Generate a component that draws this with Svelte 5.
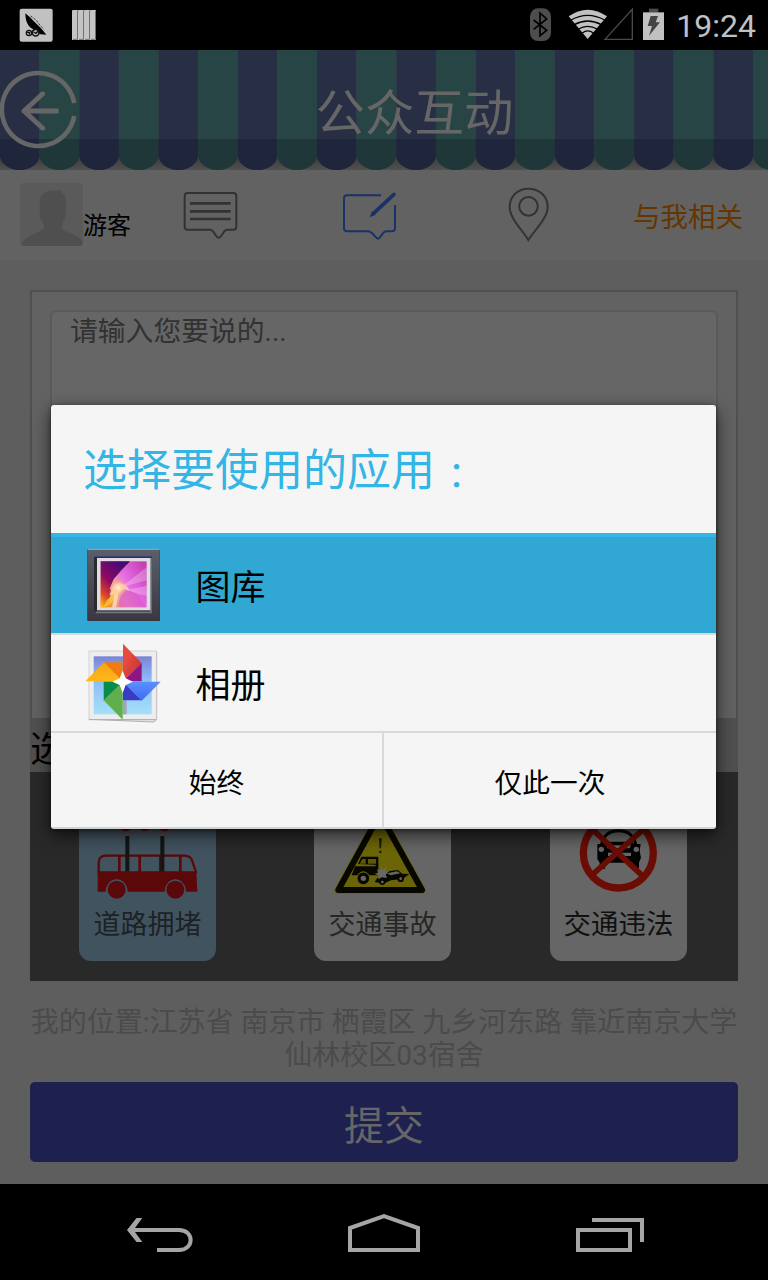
<script>
  const pitch = 39.63;
  const stripes = Array.from({ length: 20 }, (_, i) => ({ x: i * pitch, navy: i % 2 === 0 }));
  const scallop = (x, top) =>
    `M${x} ${top}H${x + pitch}V105C${x + pitch} 113 ${x + 31} 120 ${x + pitch / 2} 120C${x + 8.6} 120 ${x} 113 ${x} 105Z`;
</script>

<div class="screen">
  <header class="status">
    <svg width="110" height="50" viewBox="0 0 330 150">
      <rect x="59" y="26" width="99" height="99" rx="6" fill="#c1c1c1" />
      <path d="M76 40L90 52L103 65L117 79L127 89L139 104L121 103L105 90L94 85C82 77 76 60 76 40Z" fill="#000" />
      <path d="M92 48L109 61L120 76L132 88" stroke="#333" stroke-width="3" stroke-dasharray="7 4" fill="none" />
      <circle cx="87" cy="99" r="8" fill="#c1c1c1" stroke="#111" stroke-width="4" />
      <circle cx="107" cy="98" r="10" fill="#c1c1c1" stroke="#111" stroke-width="5" />
      <path d="M81 97H91M101 96L108 100L114 94M88 99V104" stroke="#111" stroke-width="4" fill="none" />
      {#each [216, 234, 252, 270] as x}
        <path d="M{x} 33Q{x} 30 {x + 3} 30H{x + 18}V120H{x}Z" fill="#c4c4c4" />
        <path d="M{x + 16.5} 32V118H{x + 3}" stroke="#707070" stroke-width="3" fill="none" />
      {/each}
    </svg>
    <div class="status-right">
      <svg width="150" height="50" viewBox="408 0 450 150">
        <rect x="438" y="25" width="63" height="98" rx="24" fill="#4d4d4d" />
        <path d="M449 60L488 91L468 107V39L488 57L449 88" fill="none" stroke="#000" stroke-width="5" />
        <path d="M611 117L554 49Q611 10 669 49Z" fill="#c1c1c1" />
        <g fill="none" stroke="#000" stroke-width="4">
          <path d="M561 60Q611 32 662 60" />
          <path d="M571 74Q611 52 652 74" />
          <path d="M583 87Q611 71 640 87" />
          <path d="M595 99Q611 86 628 99" />
        </g>
        <path d="M663 118L745 28V118Z" fill="none" stroke="#4a4a4a" stroke-width="4" />
        <path d="M795 26H823V37H795Z" fill="#4d4d4d" />
        <rect x="777" y="37" width="63" height="83" fill="#c1c1c1" />
        <path d="M800 48H822L815 67H828L795 107L804 78H791Z" fill="#444" />
      </svg>
      <span class="clock">19:24</span>
    </div>
  </header>

  <div class="awning">
    <svg class="awning-art" width="768" height="120" viewBox="0 0 768 120">
      <defs>
        <linearGradient id="eave" x1="0" y1="0" x2="0" y2="1">
          <stop offset="0" stop-color="#383838" />
          <stop offset="1" stop-color="#505050" />
        </linearGradient>
      </defs>
      <rect y="104" width="768" height="16" fill="url(#eave)" />
      {#each stripes as s}
        <path d={scallop(s.x, 0)} fill={s.navy ? '#282f45' : '#284545'} />
        <path d={scallop(s.x, 89)} fill={s.navy ? '#1f253a' : '#20373a'} />
      {/each}
      <path d="M74.200 53A36.500 36.500 0 1 0 74.200 66" fill="none" stroke="#666" stroke-width="4.6" />
      <path d="M58.500 61H24M43 43.500L24 61L43 78.500" fill="none" stroke="#666" stroke-width="5" stroke-linejoin="round" stroke-linecap="butt" />
      <circle cx="42.700" cy="43.800" r="2.400" fill="#666" /><circle cx="42.700" cy="78.200" r="2.400" fill="#666" />
    </svg>
    <h1>公众互动</h1>
  </div>

  <nav class="tabs">
    <div class="user">
      <svg width="63" height="63" viewBox="60 39 189 189">
        <rect x="60" y="39" width="189" height="189" rx="12" fill="#5a5a5a" />
        <path d="M66 220C72 202 108 190 120 184Q132 178 132 171Q131 160 126 153C119 148 118 135 120 121C118 105 119 82 128 72C142 59 164 64 175 60L184 61L182 65L193 76C201 88 197 107 197 121C200 132 197 148 190 152Q188 163 184 170Q185 178 197 184C212 190 242 200 249 217Q247 228 238 228H73Q65 228 66 220Z" fill="#4f4f4f" />
      </svg>
      <span>游客</span>
    </div>
    <svg class="list-icon" width="57" height="52" viewBox="546 57 171 156" fill="none" stroke="#323232">
      <path d="M563 69H700Q709 69 709 78V170Q709 179 700 179H680C671 179 665 203 656 203C647 203 641 179 632 179H563Q554 179 554 170V78Q554 69 563 69Z" stroke-width="6" />
      <path d="M570 100H692M570 124H692M570 147H692" stroke-width="8" />
    </svg>
    <svg class="edit-icon" width="60" height="54" viewBox="1023 57 180 162" fill="none" stroke="#1a3266" stroke-width="6">
      <path d="M1143 76H1041Q1032 76 1032 85V174Q1032 184 1041 184H1103C1119 184 1126 206 1134 206C1143 206 1145 184 1160 184H1176Q1185 184 1185 174V105" />
      <path d="M1120 131L1182 73" stroke-width="11" stroke-linecap="round" />
      <path d="M1109 142L1116 124L1127 134Z" fill="#1a3266" stroke="none" />
    </svg>
    <svg class="pin-icon" width="46" height="58" viewBox="366 48 138 174" fill="none" stroke="#333" stroke-width="6">
      <path d="M433 210C416 181 377 145 377 111C377 79 402 56 433 56C466 56 491 79 491 111C491 145 451 181 433 210Z" />
      <circle cx="433.500" cy="109" r="28" />
    </svg>
    <span class="related">与我相关</span>
  </nav>

  <main>
    <section class="compose">
      <div class="input">请输入您要说的...</div>
    </section>
    <div class="caption">选</div>
    <section class="kinds">
      <div class="kind chosen">
        <svg width="137" height="108" viewBox="177 276 411 324">
          <circle cx="317" cy="374" r="36" fill="#4d4f52" /><circle cx="373" cy="374" r="33" fill="#4d4f52" /><circle cx="438" cy="374" r="34" fill="#4d4f52" />
          <g fill="#5b080c"><circle cx="317" cy="377" r="17" /><circle cx="373" cy="377" r="16" /><circle cx="433" cy="377" r="17" /></g>
          <path d="M236 520V489Q236 467 258 467H493Q514 467 519 489L529 520" fill="none" stroke="#5b080b" stroke-width="7" />
          <path d="M298 467V520M359 467V520M421 467V520M481 467V520" stroke="#5b080b" stroke-width="8" />
          <path d="M322 408V516M427 408V516" stroke="#151515" stroke-width="12" />
          <path d="M233 514H529L532 575H498A32 37 0 0 0 434 575H323A33 37 0 0 0 257 575H233Z" fill="#5b080b" />
          <circle cx="290" cy="569" r="27" fill="#5b080b" /><circle cx="466" cy="569" r="27" fill="#5b080b" />
        </svg>
        <span>道路拥堵</span>
      </div>
      <div class="kind">
        <svg width="137" height="108" viewBox="72 -54 411 324">
          <path d="M270 10L397 241H143Z" fill="#6c6508" stroke="#6c6508" stroke-width="21" stroke-linejoin="round" />
          <path d="M270 12L396 240H145Z" fill="#6c6508" stroke="#080800" stroke-width="18" stroke-linejoin="round" />
          <path d="M267 85H275L273 115H269Z" fill="#141400" /><circle cx="271" cy="126" r="3.500" fill="#141400" />
          <path d="M204 162L214 140H265V196H238Q219 173 201 196H185L195 169H257V164Z" fill="#080800" />
          <path d="M209 161L217 147H227V161ZM234 147H258V161H234Z" fill="#5d5707" />
          <circle cx="220" cy="205" r="19" fill="#080800" stroke="#6c6508" stroke-width="3" /><circle cx="220" cy="205" r="8" fill="#666" />
          <path d="M254 216L262 204L284 198L295 184L324 180L336 191L358 192L338 207L303 211L280 221Z" fill="#080800" />
          <path d="M291 190L322 184L331 190L302 196Z" fill="#666" />
          <circle cx="277" cy="216" r="9" fill="#080800" /><circle cx="277" cy="216" r="4" fill="#666" />
          <circle cx="332" cy="206" r="10" fill="#080800" /><circle cx="332" cy="206" r="4" fill="#666" />
          <path d="M261 178L272 182L274 166L279 180L291 169L286 184L298 183L287 193L291 204L276 202L264 208L267 197L254 191L264 188Z" fill="#686868" />
        </svg>
        <span>交通事故</span>
      </div>
      <div class="kind">
        <svg width="137" height="108" viewBox="90 276 411 324">
          <path d="M244 438Q250 392 296 392Q341 392 348 438" fill="none" stroke="#030303" stroke-width="9" />
          <path d="M232 432H246L258 425H333L345 432H362L359 453L363 473L357 488V505H339V488H259L254 507H239V488L232 477Z" fill="#030303" />
          <path d="M259 436H333L329 445H263ZM264 458H333V468H264Z" fill="#666" />
          <circle cx="244" cy="448" r="8" fill="#666" /><circle cx="349" cy="448" r="8" fill="#666" />
          <path d="M217 388L370 530M370 388L217 524" stroke="#6b0d04" stroke-width="17" />
          <circle cx="295" cy="459" r="105" fill="none" stroke="#6b0d04" stroke-width="22" />
        </svg>
        <span class="dark">交通违法</span>
      </div>
    </section>
    <p class="address">我的位置:江苏省 南京市 栖霞区 九乡河东路 靠近南京大学仙林校区03宿舍</p>
    <button class="submit">提交</button>
  </main>

  <footer class="navbar">
    <svg width="768" height="96" viewBox="0 0 768 96" fill="none" stroke="#a5a5a5" stroke-width="4">
      <path d="M157 66H179C194.500 66 194.500 46 179 46H131" />
      <path d="M136.500 34H142.300L133.500 46L142.300 58H136.500L127 46Z" fill="#a5a5a5" stroke="none" />
      <path d="M350 66V44L384 32L418 44V66Z" />
      <path d="M578 46H630V66H578ZM592 36H642V58" />
    </svg>
  </footer>

  <div class="dialog">
    <h2>选择要使用的应用<span>：</span></h2>
    <div class="app active">
      <svg width="74" height="74" viewBox="49 54 222 222">
        <defs>
          <linearGradient id="frame" x1="0" y1="0" x2="0" y2="1"><stop offset="0" stop-color="#5b606b" /><stop offset="1" stop-color="#3a3741" /></linearGradient>
          <linearGradient id="art" x1="0" y1=".8" x2="1" y2=".2"><stop offset="0" stop-color="#f38b20" /><stop offset=".35" stop-color="#efa0b8" /><stop offset=".6" stop-color="#e56be4" /><stop offset="1" stop-color="#c541b4" /></linearGradient>
          <linearGradient id="dusk" x1=".6" y1="0" x2="0" y2="1"><stop offset="0" stop-color="#4a0878" /><stop offset=".45" stop-color="#8d0b61" /><stop offset=".75" stop-color="#e0452a" /><stop offset="1" stop-color="#ffcf10" /></linearGradient>
          <radialGradient id="glow"><stop offset="0" stop-color="#fff8e0" /><stop offset=".35" stop-color="#ffd0a0" stop-opacity=".8" /><stop offset="1" stop-color="#ffa060" stop-opacity="0" /></radialGradient>
        </defs>
        <rect x="50" y="58" width="218" height="215" rx="2" fill="#34343c" />
        <rect x="51" y="57" width="216" height="213" fill="url(#frame)" />
        <path d="M51 58H267" stroke="#a2adb8" stroke-width="3" />
        <path d="M70 79H243V249H76L70 243Z" fill="#2b2a31" />
        <path d="M70 80H242" stroke="#444784" stroke-width="3" />
        <path d="M75 247H241V84" stroke="#77777b" stroke-width="5" fill="none" />
        <rect x="79" y="84" width="160" height="157" fill="#dedee2" />
        <rect x="90" y="94" width="138" height="138" fill="url(#art)" />
        <path d="M90 94H177L151 121L128 147L116 174L124 183L109 232H90Z" fill="url(#dusk)" />
        <path d="M228 112L151 172L228 151ZM164 181L228 198V168Z" fill="#fff" opacity=".25" />
        <path d="M144 232C146 190 160 178 174 181Q205 188 225 232Z" fill="#d957c6" opacity=".65" />
        <path d="M116 203Q134 170 150 172Q164 176 149 185L117 224L99 232L108 211Z" fill="#ffcd36" opacity=".75" />
        <path d="M116 196Q124 160 145 160Q170 162 176 183Q158 170 144 190L136 232H124L132 192Z" fill="#ffe9cf" opacity=".7" />
        <circle cx="143" cy="173" r="28" fill="url(#glow)" />
        <path d="M176 95L151 121L128 147L116 174" fill="none" stroke="#4e0b3e" stroke-width="2" />
      </svg>
      <span>图库</span>
    </div>
    <div class="app">
      <svg width="78" height="84" viewBox="43 332 234 252">
        <defs>
          <linearGradient id="sky" x1="0" y1="0" x2="0" y2="1"><stop offset="0" stop-color="#7b83d4" /><stop offset=".4" stop-color="#8cbcf9" /><stop offset="1" stop-color="#a5e0f8" /></linearGradient>
          <linearGradient id="red" x1="0" y1="0" x2="1" y2="1"><stop offset=".3" stop-color="#e84b3e" /><stop offset="1" stop-color="#b82f34" /></linearGradient>
          <linearGradient id="blue" x1="0" y1="0" x2="0" y2="1"><stop offset="0" stop-color="#5a91ff" /><stop offset="1" stop-color="#3f6cf0" /></linearGradient>
          <linearGradient id="gold" x1="0" y1="0" x2="0" y2="1"><stop offset="0" stop-color="#f7a11a" /><stop offset="1" stop-color="#ffb916" /></linearGradient>
        </defs>
        <path d="M60 567L253 575L261 567V364" fill="#e8e8e8" stroke="#a3a3a3" stroke-width="2.500" />
        <rect x="58" y="362" width="202" height="206" fill="#ededed" stroke="#c5c5c5" stroke-width="2" />
        <path d="M58 568H259" stroke="#999" stroke-width="2" />
        <rect x="72" y="378" width="174" height="174" fill="url(#sky)" />
        <path d="M160 510H171V552H160Z" fill="#a4a5af" />
        <path d="M103 396H159V453H145Z" fill="#ef7c13" /><path d="M47 453L103 396L159 453Z" fill="url(#gold)" />
        <path d="M216 398V453H160Z" fill="#8e1684" /><path d="M160 340L216 398L160 453Z" fill="url(#red)" />
        <path d="M160 454L216 510H160Z" fill="#3a3bc1" /><path d="M160 454H273L216 511Z" fill="url(#blue)" />
        <path d="M102 454H160L102 511Z" fill="#078c4c" /><path d="M102 510L159 454V568Z" fill="#60af4c" />
        <path d="M159 421L168 444L190 454L168 464L159 488L150 464L128 454L150 444Z" fill="#fff" />
      </svg>
      <span>相册</span>
    </div>
    <div class="actions">
      <button>始终</button>
      <button>仅此一次</button>
    </div>
  </div>
</div>

<style>
  :global(body) { background: #000; }
  .screen {
    position: relative;
    width: 768px;
    height: 1280px;
    overflow: hidden;
    display: flex;
    flex-direction: column;
    background: #5e5e5e;
    font-family: Roboto, "Noto Sans CJK SC", sans-serif;
    font-weight: 400;
  }
  svg { display: block; flex: none; }
  h1, h2, p { margin: 0; font-weight: 400; }
  button { border: 0; padding: 0; font: inherit; }
  .status { height: 50px; background: #000; display: flex; justify-content: space-between; }
  .status-right { display: flex; padding-right: 12px; }
  .clock { width: 86px; text-align: right; font-size: 32px; line-height: 53px; color: #c1c1c1; }
  .awning { position: relative; height: 120px; background: #505050; }
  .awning-art { position: absolute; inset: 0; }
  h1 { position: relative; text-align: center; font-size: 49.5px; line-height: 129px; padding-left: 61px; height: 120px; color: #666; }
  .tabs { height: 90px; box-sizing: border-box; background: #626262; display: flex; align-items: flex-start; padding: 13px 25px 0 20px; }
  .user { display: flex; align-items: flex-end; width: 113px; font-size: 24px; line-height: 40px; color: #000; }
  .list-icon { margin: 6px 0 0 49px; }
  .edit-icon { margin: 6px 0 0 102px; }
  .pin-icon { margin: 3px 0 0 105px; }
  .related { margin-left: auto; font-size: 27.5px; line-height: 70px; color: #663500; }
  main { flex: 1; padding: 30px 30px 22px; display: flex; flex-direction: column; }
  .compose { height: 428px; box-sizing: border-box; border: 2px solid #505050; border-bottom: 0; background: #626262; padding: 18px 18px 0; }
  .input { height: 408px; box-sizing: border-box; border: 2px solid #5a5a5a; border-bottom: 0; border-radius: 6px 6px 0 0; background: #666; padding-left: 18px; font-size: 27.8px; line-height: 39px; color: #323232; }
  .caption { height: 54px; background: #505050; font-size: 36px; line-height: 64px; color: #000; }
  .kinds { height: 209px; box-sizing: border-box; background: #292929; display: flex; gap: 98px; padding: 20px 0 0 49px; }
  .kind { width: 137px; height: 169px; border-radius: 12px; background: #666; font-size: 27px; line-height: 51px; text-align: center; color: #272727; overflow: hidden; }
  .kind:last-child { margin-left: 1px; line-height: 49px; }
  .kind.chosen { background: #41535f; color: #1c2226; }
  .kind .dark { color: #111; font-size: 27.500px; }
  .address { margin: 25px -4px 0; height: 76px; font-size: 28px; line-height: 33px; text-align: center; color: #4b4b4b; }
  .submit { height: 80px; border-radius: 5px; background: #1e2050; color: #666; font-size: 40px; line-height: 89px; overflow: hidden; }
  .navbar { height: 96px; background: #000; }
  .dialog { position: absolute; left: 51px; top: 405px; width: 665px; height: 424px; box-sizing: border-box; border-radius: 3px; border-bottom: 2px solid #d2d2d2; background: #f5f5f5; box-shadow: 0 6px 18px rgba(0, 0, 0, .65), 0 1px 4px rgba(0, 0, 0, .4); overflow: hidden; color: #000; }
  h2 { display: flex; height: 132px; box-sizing: border-box; border-bottom: 4px solid #33b5e5; padding-left: 32px; font-size: 44px; line-height: 133px; color: #33b5e5; }
  h2 span { font-family: "Noto Sans CJK TC", sans-serif; font-size: 35px; line-height: 138px; padding-left: 4px; }
  .app { height: 98px; box-sizing: border-box; border-bottom: 2px solid #d9d9d9; display: flex; align-items: center; font-size: 35px; }
  .app span { line-height: 40px; padding-top: 7px; }
  .app svg { width: 74px; margin: 0 35px 0 35.500px; }
  .app:nth-of-type(2) svg { width: 78px; margin: 0 33.500px 0 33px; }
  .active { background: #31a8d4; }
  .actions { display: grid; grid-template-columns: 331px 1fr; height: 96px; }
  .actions button { height: 96px; overflow: hidden; background: #f5f5f5; font-size: 27.7px; line-height: 102px; color: #000; }
  .actions button + button { border-left: 2px solid #d9d9d9; }
</style>
